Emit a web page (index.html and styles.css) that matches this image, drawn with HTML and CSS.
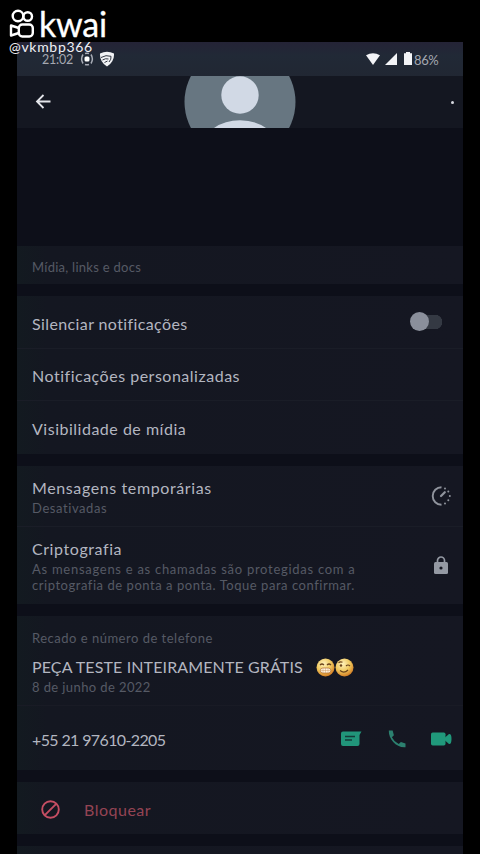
FILE: index.html
```html
<!DOCTYPE html>
<html lang="pt-BR">
<head>
<meta charset="utf-8">
<title>Dados do contato</title>
<link rel="stylesheet" href="styles.css">
</head>
<body>
<main class="phone">
  <header class="status">
    <span class="clock">21:02</span>
    <svg class="cast" width="14" height="14" viewBox="0 0 14 14"><rect x="4.500" y="4.500" width="5" height="5" rx="1.500" fill="#fff"/><path d="M3 2.500Q.2 7 3 11.500M11 2.500Q13.800 7 11 11.500M5 1.500Q7 .8 9 1.500M5 12.500Q7 13.200 9 12.500" fill="none" stroke="#a9adb7" stroke-width="1.500"/></svg>
    <svg class="shield" width="16" height="16" viewBox="0 0 16 16"><path d="M1 2.500Q8-.8 15 2.500Q15.500 11 8 15.500Q.5 11 1 2.500Z" fill="#f1f2f5"/><path d="M2 6.500q5-3 10-1.200q.5 3-2 5.700M3.500 9q3-2 6-1M5.500 11.500l3-1.500" fill="none" stroke="#303642" stroke-width="1"/></svg>
    <svg class="wifi" width="14" height="12" viewBox="0 0 14 12"><path d="M0 2.300Q7-2 14 2.300L7 12Z" fill="#f3f4f7"/></svg>
    <svg class="signal" width="12" height="12" viewBox="0 0 12 12"><path d="M12 0v12H0Z" fill="#f3f4f7"/></svg>
    <svg class="battery" width="8" height="13" viewBox="0 0 8 13"><path d="M2 0h4v1.300h2V13H0V1.300h2Z" fill="#f3f4f7"/></svg>
    <span class="percent">86%</span>
  </header>
  <nav class="topbar">
    <svg class="back" width="16" height="16" viewBox="0 0 16 16"><path d="M15.500 7.500H2.500M8.500 1L2 7.500L8.500 14" fill="none" stroke="#e3e5ea" stroke-width="1.800"/></svg>
    <svg class="avatar" width="112" height="52" viewBox="0 0 112 52"><circle cx="56" cy="26" r="55.500" fill="#677681"/><circle cx="56" cy="19" r="18.700" fill="#d1d9e5"/><path d="M30 52Q41 44.300 56 44.300T82 52Z" fill="#d1d9e5"/></svg>
    <span class="more"></span>
  </nav>
  <div class="blank"></div>
  <section class="group media"><span class="small media-text">Mídia, links e docs</span></section>
  <section class="group">
    <div class="row mute"><span class="title t-mute">Silenciar notificações</span><span class="toggle"><i class="knob"></i></span></div>
    <div class="row"><span class="title t-custom">Notificações personalizadas</span></div>
    <div class="row last"><span class="title t-visible">Visibilidade de mídia</span></div>
  </section>
  <section class="group">
    <div class="row temporary">
      <div><div class="title t-temp">Mensagens temporárias</div><div class="small s-off">Desativadas</div></div>
      <svg class="side-icon" width="20" height="20" viewBox="0 0 20 20"><path d="M10.500 1.200A8.800 8.800 0 1 0 10.500 18.800" fill="none" stroke="#90949d" stroke-width="1.900"/><path d="M10 10l3.800-3.800" stroke="#90949d" stroke-width="2.200" stroke-linecap="round"/><g fill="#90949d"><circle cx="14" cy="2.500" r="1"/><circle cx="17.300" cy="5.500" r="1"/><circle cx="18.800" cy="10" r="1"/><circle cx="17.300" cy="14.300" r="1"/><circle cx="14" cy="17.400" r="1"/></g></svg>
    </div>
    <div class="row crypto last">
      <div><div class="title t-crypto">Criptografia</div><div class="small s-crypto"><span class="s-line1">As mensagens e as chamadas são protegidas com a</span><br><span class="s-line2">criptografia de ponta a ponta. Toque para confirmar.</span></div></div>
      <svg class="lock" width="14" height="18" viewBox="0 0 14 18"><path d="M3.500 7V4.500a3.500 3.500 0 0 1 7 0V7" fill="none" stroke="#9499a3" stroke-width="1.700"/><rect y="6" width="14" height="12" rx="1.500" fill="#9499a3"/><circle cx="7" cy="12" r="1.600" fill="#151721"/></svg>
    </div>
  </section>
  <section class="group">
    <div class="about">
      <div class="small s-about">Recado e número de telefone</div>
      <div class="title message"><span class="t-message">PEÇA TESTE INTEIRAMENTE GRÁTIS</span>
        <svg width="38" height="19" viewBox="0 0 38 19"><defs><radialGradient id="face" cx=".4" cy=".3" r=".75"><stop offset="0" stop-color="#fff2bd"/><stop offset=".55" stop-color="#efc75c"/><stop offset="1" stop-color="#cf721c"/></radialGradient></defs><circle cx="9.500" cy="9.500" r="9" fill="url(#face)"/><circle cx="28.500" cy="9.500" r="9" fill="url(#face)"/><path d="M4 7q2-2 4 0M11 7q2-2 4 0" fill="none" stroke="#6b431b" stroke-width="1.200"/><rect x="4.300" y="10" width="10.500" height="5" rx="2.500" fill="#fff3dc" stroke="#a55c20" stroke-width=".6"/><path d="M7 10v5M9.500 10v5M12 10v5M4.500 12.500h10" stroke="#c68b55" stroke-width=".4"/><circle cx="25" cy="7.500" r="1.200" fill="#6b431b"/><path d="M22.500 4.800q2-1.500 4-.5M30 8q2-2 4 0M24 12.500q4 3.500 8-.5" fill="none" stroke="#6b431b" stroke-width="1.100"/></svg>
      </div>
      <div class="small s-date">8 de junho de 2022</div>
    </div>
    <div class="row contact last">
      <span class="title t-phone">+55 21 97610-2205</span>
      <div class="actions">
        <svg width="21" height="16" viewBox="0 0 21 16"><path d="M2 .5h18.500L18.500 4v9q0 2-2 2H2q-2 0-2-2V2.500Q0 .5 2 .5Z" fill="#21957a"/><path d="M4 5.500h10M4 9h7" stroke="#143b38" stroke-width="1.500"/></svg>
        <svg width="18" height="18" viewBox="0 0 18 18"><path d="M.8.500h3.800l1.300 4.800-2 2q2.300 4.600 6.800 6.800l2.200-2 4.600 1.300v3.800C8.500 18 .5 9.500.8.500Z" fill="#2c806f"/></svg>
        <svg width="21" height="14" viewBox="0 0 21 14"><rect y=".5" width="14.500" height="13" rx="1.700" fill="#20997b"/><path d="M14 5.500L18 2q2.500-.5 2.500 5T18 12l-4-3.500Z" fill="#20997b"/></svg>
      </div>
    </div>
  </section>
  <section class="group block">
    <svg width="19" height="19" viewBox="0 0 19 19"><circle cx="9.500" cy="9.500" r="8.300" fill="none" stroke="#c54e63" stroke-width="1.900"/><path d="M3.800 15.200L15.200 3.800" stroke="#c54e63" stroke-width="1.900"/></svg>
    <span class="title t-block">Bloquear</span>
  </section>
  <section class="group tail"></section>
</main>
<aside class="watermark">
  <div class="brand">
    <svg width="26" height="30" viewBox="0 0 26 30"><g fill="none" stroke="#fff" stroke-width="2.400" stroke-linejoin="round"><circle cx="9" cy="7" r="5.300"/><circle cx="18.700" cy="7.500" r="4.300"/><rect x="9.800" y="15.500" width="14" height="12" rx="3.500"/><path d="M9.800 19L2 16.500v10l7.800-2.500"/></g></svg>
    <span class="brand-name">kwai</span>
  </div>
  <div class="handle">@vkmbp366</div>
</aside>
</body>
</html>
```
FILE: styles.css
```css
* { box-sizing: border-box; }
html, body { margin: 0; height: 854px; background: #000; overflow: hidden; }
body { position: relative; display: flow-root; font-family: Lato, "Open Sans", sans-serif; }
svg { display: block; flex: none; }
.phone { width: 446px; height: 812px; margin: 42px 0 0 17px; background: #0d0f19; overflow: hidden; display: flow-root; }
.status { height: 34px; display: flex; align-items: center; padding: 1px 24px 0 25px; color: #a5a8b1; background: linear-gradient(#242336, #212936 40%, #212733); }
.clock { width: 38px; font-size: 12.5px; line-height: 12px; letter-spacing: -.2px; padding-top: 1px; }
.cast { margin-top: -1px; }
.shield { margin-left: 5px; margin-top: -2px; }
.wifi { margin-left: auto; margin-top: -2px; }
.signal { margin-left: 5px; margin-top: -1px; }
.battery { margin-left: 7px; margin-top: -2px; }
.percent { width: 25px; margin-left: 2px; font-size: 13px; letter-spacing: -.4px; }
.topbar { height: 52px; display: flex; align-items: center; padding: 0 9px 0 18px; background: #141721; }
.back { margin-right: 133px; }
.more { width: 3px; height: 3px; margin-left: auto; border-radius: 50%; background: #d6d8df; }
.blank { height: 118px; background: #0d0f19; }
.group { margin-bottom: 12px; background: linear-gradient(90deg, #131a20, #141721 30px, #151722); }
.media { height: 38px; padding: 13px 15px 0; }
.media-text { display: block; letter-spacing: .27px; }
.row { height: 52.5px; display: flex; align-items: center; justify-content: space-between; padding: 3px 20px 0 15px; border-bottom: 1px solid #1a1d27; }
.row.mute { padding: 5px 21px 0 15px; }
.row.last { border-bottom: 0; height: 53px; }
.title { font-size: 16px; line-height: 22px; color: #b3b6c0; white-space: nowrap; }
.small { font-size: 13px; line-height: 16px; color: #565a65; white-space: nowrap; }
.t-mute { letter-spacing: .39px; }
.t-custom { letter-spacing: .51px; }
.t-visible { letter-spacing: .51px; }
.t-temp { letter-spacing: .61px; }
.t-crypto { letter-spacing: .58px; }
.t-message { letter-spacing: .12px; }
.t-phone { letter-spacing: -.63px; }
.s-off { letter-spacing: .58px; padding-top: 1px; }
.s-line1 { letter-spacing: .72px; }
.s-line2 { letter-spacing: .54px; }
.s-about { letter-spacing: .5px; }
.s-crypto { line-height: 16.500px; padding-top: 1px; }
.toggle { width: 32px; height: 20px; display: flex; align-items: center; background: linear-gradient(#343943, #343943) 10px 3px / 12px 14px no-repeat, radial-gradient(circle at 25px 10px, #343943 7px, transparent 7.5px); margin-top: -5px; }
.knob { width: 19px; height: 19px; border-radius: 50%; background: #8a8f9b; }
.row.temporary { height: 60.500px; padding: 2px 12px 0 15px; }
.side-icon { margin-top: -2px; }
.row.crypto { height: 77.500px; padding: 1px 15px 0 15px; }
.lock { margin-top: -2px; }
.about { height: 90px; padding: 14px 15px 0; border-bottom: 1px solid #191b25; }
.message { display: flex; align-items: center; gap: 13px; margin-top: 10px; }
.s-date { margin-top: 1px; letter-spacing: .4px; }
.row.contact { height: 64px; padding: 4px 11px 0 15px; }
.actions { display: flex; align-items: center; gap: 25.500px; margin-top: -3px; }
.block { height: 52px; display: flex; align-items: center; gap: 24px; padding: 2px 24px 0; }
.t-block { color: #944454; padding-top: 2px; letter-spacing: .5px; }
.tail { height: 20px; }
.watermark { position: absolute; left: 9px; top: 8px; color: #fff; }
.brand { display: flex; align-items: center; height: 32px; gap: 4px; }
.brand-name { font-size: 34px; line-height: 32px; letter-spacing: -.2px; -webkit-text-stroke: .3px #fff; }
.handle { font-size: 14px; line-height: 14px; letter-spacing: .7px; color: #f0f0f4; }
```
